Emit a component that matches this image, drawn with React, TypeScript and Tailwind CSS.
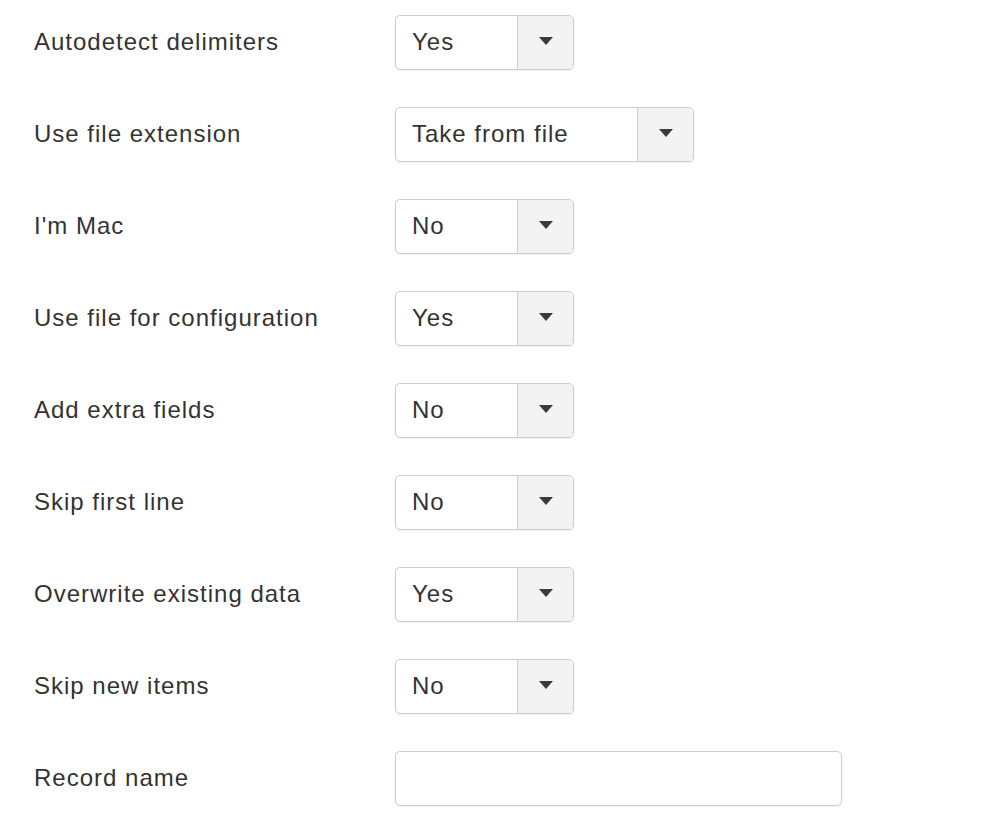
import React from "react";

const rows: { label: string; value: string; wide?: boolean }[] = [
  { label: "Autodetect delimiters", value: "Yes" },
  { label: "Use file extension", value: "Take from file", wide: true },
  { label: "I'm Mac", value: "No" },
  { label: "Use file for configuration", value: "Yes" },
  { label: "Add extra fields", value: "No" },
  { label: "Skip first line", value: "No" },
  { label: "Overwrite existing data", value: "Yes" },
  { label: "Skip new items", value: "No" },
];

function Select({ value, wide }: { value: string; wide?: boolean }) {
  return (
    <div
      className={
        (wide ? "w-[299px]" : "w-[179px]") +
        " h-[55px] flex rounded-[5px] border border-[#cccccc] bg-white shadow-[0_1px_2px_rgba(0,0,0,0.06)] overflow-hidden"
      }
    >
      <div className="flex-1 flex items-center pl-[16px] pb-[2px] text-[24px] tracking-[1px] text-[#333333]">{value}</div>
      <div className="w-[56px] flex items-center justify-center border-l border-[#cccccc] bg-[#f3f3f3]">
        <svg width="16" height="8" viewBox="0 0 16 8" className="-mt-[3px]">
          <path d="M1 0 L15 0 L8 8 Z" fill="#3a3a3a" />
        </svg>
      </div>
    </div>
  );
}

export default function App() {
  return (
    <div
      className="w-[984px] h-[840px] bg-white pl-[34px] pt-[15px]"
      style={{ fontFamily: '"Liberation Sans", Arial, sans-serif' }}
    >
      {rows.map((r) => (
        <div key={r.label} className="flex items-center mb-[37px]">
          <div className="w-[361px] pb-[2px] text-[24px] tracking-[1px] text-[#333333]">{r.label}</div>
          <Select value={r.value} wide={r.wide} />
        </div>
      ))}
      <div className="flex items-center">
        <div className="w-[361px] pb-[2px] text-[24px] tracking-[1px] text-[#333333]">Record name</div>
        <div className="w-[447px] h-[55px] rounded-[5px] border border-[#cccccc] bg-white shadow-[0_1px_2px_rgba(0,0,0,0.06)]" />
      </div>
    </div>
  );
}
